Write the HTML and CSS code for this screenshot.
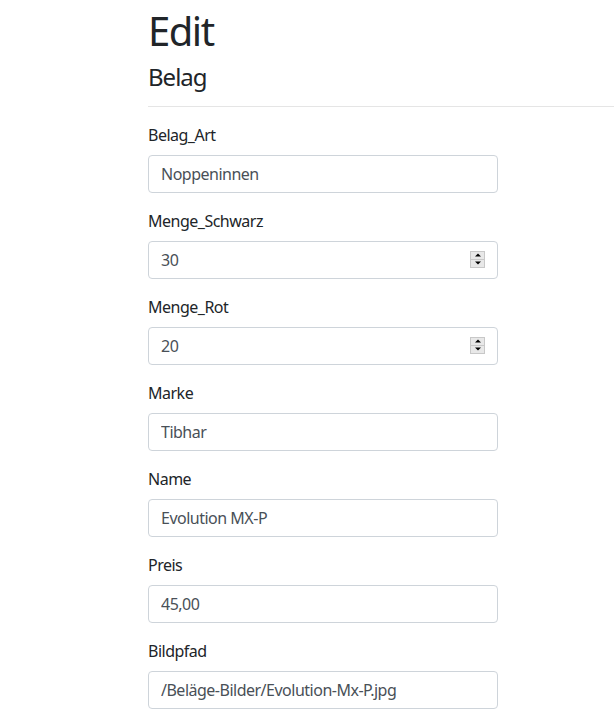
FILE: index.html
```html
<!DOCTYPE html>
<html lang="de">
<head>
<meta charset="utf-8">
<title>Edit</title>
<link rel="stylesheet" href="styles.css">
</head>
<body>
<main class="page">
  <h1 class="title">Edit</h1>
  <h4 class="subtitle">Belag</h4>
  <hr class="rule">
  <form class="form">
    <div class="group">
      <label class="label">Belag_Art</label>
      <input class="control" type="text" value="Noppeninnen">
    </div>
    <div class="group">
      <label class="label">Menge_Schwarz</label>
      <div class="num">
        <input class="control" type="text" value="30">
        <span class="spin"><span class="spin-up"></span><span class="spin-down"></span></span>
      </div>
    </div>
    <div class="group">
      <label class="label">Menge_Rot</label>
      <div class="num">
        <input class="control" type="text" value="20">
        <span class="spin"><span class="spin-up"></span><span class="spin-down"></span></span>
      </div>
    </div>
    <div class="group">
      <label class="label">Marke</label>
      <input class="control" type="text" value="Tibhar">
    </div>
    <div class="group">
      <label class="label">Name</label>
      <input class="control" type="text" value="Evolution MX-P">
    </div>
    <div class="group">
      <label class="label">Preis</label>
      <input class="control" type="text" value="45,00">
    </div>
    <div class="group">
      <label class="label">Bildpfad</label>
      <input class="control" type="text" value="/Beläge-Bilder/Evolution-Mx-P.jpg">
    </div>
  </form>
</main>
</body>
</html>
```

FILE: styles.css
```css
html, body {
  margin: 0;
  padding: 0;
  background: #fff;
}
body {
  font-family: "Noto Sans", "Open Sans", sans-serif;
  font-size: 16px;
  line-height: 1.5;
  color: #212529;
  letter-spacing: -0.5px;
}
.page {
  margin-left: 148px;
  padding-top: 7px;
}
.title {
  font-size: 40px;
  font-weight: 400;
  line-height: 1.2;
  margin: 0 0 8px;
  letter-spacing: -1.5px;
}
.subtitle {
  font-size: 24px;
  font-weight: 400;
  line-height: 1.2;
  margin: 0 0 8px;
  letter-spacing: -1px;
}
.rule {
  margin: 14px 0 16px;
  border: 0;
  border-top: 1px solid rgba(0,0,0,0.1);
  height: 0;
}
.form {
  width: 350px;
}
.group {
  margin-bottom: 16px;
}
.label {
  display: block;
  margin-bottom: 8px;
}
.control {
  display: block;
  box-sizing: border-box;
  width: 100%;
  height: 38px;
  padding: 6px 12px;
  font: inherit;
  letter-spacing: -0.5px;
  color: #495057;
  background: #fff;
  border: 1px solid #ced4da;
  border-radius: 4px;
  outline: none;
}
.num {
  position: relative;
}
.spin {
  position: absolute;
  right: 13px;
  top: 10px;
  width: 15px;
  height: 17px;
  box-sizing: border-box;
  border: 1px solid #c8c8c8;
  background: #e8e8e8;
  display: flex;
  flex-direction: column;
}
.spin-up, .spin-down {
  flex: 1;
  position: relative;
}
.spin-up {
  border-bottom: 1px solid #c8c8c8;
}
.spin-up::after, .spin-down::after {
  content: "";
  position: absolute;
  left: 50%;
  top: 50%;
  transform: translate(-50%, -50%);
  border-left: 3px solid transparent;
  border-right: 3px solid transparent;
}
.spin-up::after {
  border-bottom: 3px solid #000;
}
.spin-down::after {
  border-top: 3px solid #000;
}
```
